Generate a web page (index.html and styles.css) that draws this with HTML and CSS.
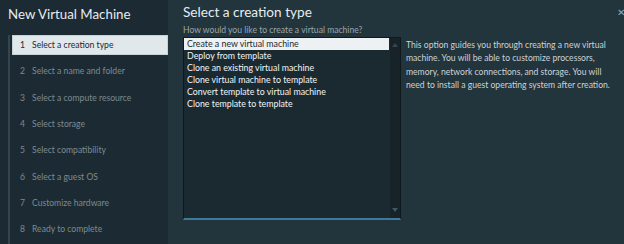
FILE: index.html
```html
<!DOCTYPE html>
<html lang="en">
  <head>
    <meta charset="UTF-8" />
    <meta name="viewport" content="width=device-width, initial-scale=1.0" />
    <link rel="stylesheet" href="styles.css">
    <title>New Virtual Machine</title>
  </head>
  <body>
    <aside class="sidebar">
      <h1>New Virtual Machine</h1>
      <ol class="steps">
        <li class="step active"><span class="num">1</span>Select a creation type</li>
        <li class="step"><span class="num">2</span>Select a name and folder</li>
        <li class="step"><span class="num">3</span>Select a compute resource</li>
        <li class="step"><span class="num">4</span>Select storage</li>
        <li class="step"><span class="num">5</span>Select compatibility</li>
        <li class="step"><span class="num">6</span>Select a guest OS</li>
        <li class="step"><span class="num">7</span>Customize hardware</li>
        <li class="step"><span class="num">8</span>Ready to complete</li>
      </ol>
    </aside>

    <main class="content">
      <h2>Select a creation type</h2>
      <p class="question">How would you like to create a virtual machine?</p>
      <div class="row">
        <div class="listbox">
          <ul class="options">
            <li class="option selected">Create a new virtual machine</li>
            <li class="option">Deploy from template</li>
            <li class="option">Clone an existing virtual machine</li>
            <li class="option">Clone virtual machine to template</li>
            <li class="option">Convert template to virtual machine</li>
            <li class="option">Clone template to template</li>
          </ul>
          <div class="scrollbar">
            <span class="arrow up"></span>
            <span class="arrow down"></span>
          </div>
        </div>
        <p class="description">
          This option guides you through creating a new virtual machine. You will be able to customize processors, memory, network connections, and storage. You will need to install a guest operating system after creation.
        </p>
      </div>
      <button class="close" aria-label="Close">&#x2715;</button>
    </main>
  </body>
</html>
```

FILE: styles.css
```css
* {
  padding: 0;
  margin: 0;
  box-sizing: border-box;
  font-family: Lato, "Open Sans", sans-serif;
}

body {
  width: 624px;
  height: 244px;
  overflow: hidden;
  display: flex;
  background-color: #22343c;
}

.sidebar {
  width: 168px;
  flex-shrink: 0;
  background-color: #1c2a33;
  padding-top: 5px;
}

.sidebar h1 {
  margin-left: 8px;
  font-size: 13.3px;
  font-weight: 400;
  color: #e6ecef;
  height: 27px;
  padding-top: 1px;
}

.steps {
  list-style: none;
  margin-left: 8px;
  border-left: 2px solid #36454d;
  padding-left: 2px;
  height: 212px;
}

.step {
  height: 26.3px;
  display: flex;
  align-items: center;
  padding-left: 8px;
  font-size: 8.6px;
  color: #7c8a91;
}

.step .num {
  width: 12px;
}

.step.active {
  height: 20px;
  margin: 3px 0 3.3px;
  background-color: #e1e8ec;
  border: 1px solid #c7d1d6;
  color: #1b2930;
  padding-left: 7px;
}

.content {
  flex: 1;
  position: relative;
  padding-left: 15px;
  padding-top: 3px;
}

.content h2 {
  font-size: 13.6px;
  font-weight: 400;
  color: #e6ecef;
  height: 22px;
  padding-top: 1px;
}

.question {
  font-size: 8.6px;
  color: #9aa6ac;
  height: 12px;
}

.row {
  display: flex;
  gap: 5px;
}

.listbox {
  width: 218px;
  height: 183px;
  display: flex;
  background-color: #1b2a31;
  border: 1px solid #0f181c;
  border-bottom: 2px solid #3d7b98;
}

.options {
  list-style: none;
  flex: 1;
}

.option {
  height: 12px;
  line-height: 12px;
  padding-left: 3px;
  font-size: 8.8px;
  color: #f1f4f5;
}

.option.selected {
  background-color: #eef1f3;
  color: #1b2930;
  margin-right: 1px;
}

.scrollbar {
  width: 10px;
  background-color: #172329;
  display: flex;
  flex-direction: column;
  justify-content: space-between;
  align-items: center;
  padding: 5px 0 6px;
}

.arrow {
  width: 0;
  height: 0;
  border-left: 3px solid transparent;
  border-right: 3px solid transparent;
}

.arrow.up {
  border-bottom: 4px solid #34474f;
}

.arrow.down {
  border-top: 4px solid #3c5a68;
}

.description {
  width: 212px;
  padding-top: 2px;
  font-size: 8.6px;
  line-height: 13.3px;
  color: #cbd3d7;
}

.close {
  position: absolute;
  top: 6px;
  right: -1px;
  background: none;
  border: none;
  font-size: 10px;
  color: #9aa7ad;
}
```
